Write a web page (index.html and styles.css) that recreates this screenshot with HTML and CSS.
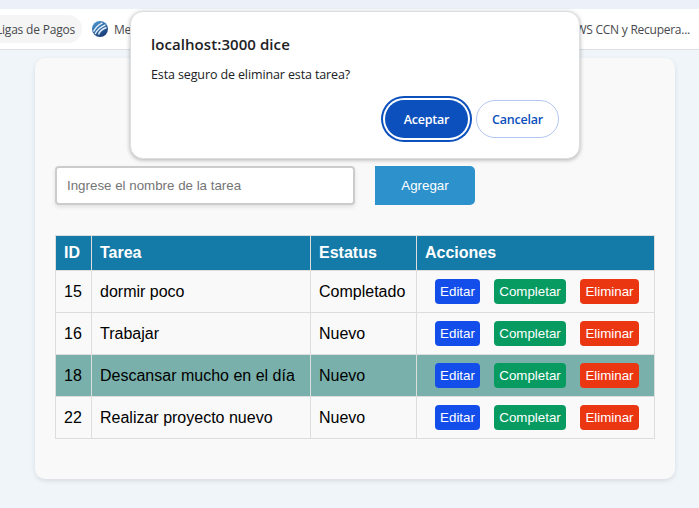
FILE: index.html
```html
<!DOCTYPE html>
<html lang="es">
<head>
<meta charset="utf-8">
<title>Tareas</title>
<link rel="stylesheet" href="styles.css">
</head>
<body>
<div class="tabstrip"></div>
<nav class="bookmarks">
  <div class="bookmark active"><span class="ligas">Ligas de Pagos</span></div>
  <div class="bookmark second">
    <svg width="16" height="16" viewBox="0 0 16 16">
      <defs><linearGradient id="g" x1="0" y1="0" x2="0.6" y2="1"><stop offset="0" stop-color="#5aa0cf"/><stop offset=".5" stop-color="#3270ad"/><stop offset="1" stop-color="#1b3c78"/></linearGradient></defs>
      <circle cx="8" cy="8" r="8" fill="url(#g)"/>
      <path d="M1.500 10.500C3.500 6.500 6 4 10.500 1.800M3.200 13C5 9 8 6 13.500 3.800M6.500 13.500C7.500 10.500 10 8 14.500 6.500" fill="none" stroke="#e6f1fa" stroke-width="1.400"/>
    </svg>
    <span>Me</span>
  </div>
  <div class="bookmark last">WS CCN y Recupera...</div>
</nav>
<main class="card">
  <form class="task-form">
    <input class="task-input" type="text" placeholder="Ingrese el nombre de la tarea">
    <button class="add" type="button">Agregar</button>
  </form>
  <table class="tasks">
    <colgroup><col class="c-id"><col class="c-task"><col class="c-status"><col class="c-actions"></colgroup>
    <thead><tr><th>ID</th><th>Tarea</th><th>Estatus</th><th>Acciones</th></tr></thead>
    <tbody>
      <tr><td>15</td><td>dormir poco</td><td>Completado</td><td><div class="actions"><button class="edit">Editar</button><button class="done">Completar</button><button class="del">Eliminar</button></div></td></tr>
      <tr><td>16</td><td>Trabajar</td><td>Nuevo</td><td><div class="actions"><button class="edit">Editar</button><button class="done">Completar</button><button class="del">Eliminar</button></div></td></tr>
      <tr class="hover"><td>18</td><td>Descansar mucho en el día</td><td>Nuevo</td><td><div class="actions"><button class="edit">Editar</button><button class="done">Completar</button><button class="del">Eliminar</button></div></td></tr>
      <tr><td>22</td><td>Realizar proyecto nuevo</td><td>Nuevo</td><td><div class="actions"><button class="edit">Editar</button><button class="done">Completar</button><button class="del">Eliminar</button></div></td></tr>
    </tbody>
  </table>
</main>
<div class="dialog" role="dialog">
  <h2><span>localhost:3000 dice</span></h2>
  <p><span>Esta seguro de eliminar esta tarea?</span></p>
  <div class="dialog-actions">
    <button class="accept">Aceptar</button>
    <button class="cancel">Cancelar</button>
  </div>
</div>
</body>
</html>
```
FILE: styles.css
```css
* { box-sizing: border-box; }
body {
  margin: 0;
  width: 699px;
  height: 508px;
  overflow: hidden;
  position: relative;
  background: #f0f5fa;
  font-family: "Liberation Sans", Arial, sans-serif;
  font-size: 16px;
  color: #000;
}
button { font-family: inherit; border: 0; margin: 0; padding: 0; white-space: nowrap; }
.tabstrip { height: 9px; background: #ebf0f9; }
.bookmarks {
  height: 41px;
  background: #fff;
  border-bottom: 1px solid #dcdfe3;
  display: flex;
  align-items: center;
  font-family: "Open Sans", "Noto Sans", sans-serif;
  font-size: 12px;
  letter-spacing: -0.2px;
  color: #47494d;
  white-space: nowrap;
}
.bookmark { display: flex; align-items: center; }
.active { width: 82px; height: 28px; border-radius: 0 14px 14px 0; background: #f5f5f5; justify-content: flex-end; padding-right: 7px; }
.second { margin-left: 10px; gap: 6px; }
.last { margin-left: auto; padding-right: 9px; letter-spacing: -0.25px; }
.card {
  width: 640px;
  height: 421px;
  margin: 8px 0 0 35px;
  padding: 108px 20px 20px;
  border-radius: 10px;
  background: #f9f9f9;
  box-shadow: 0 2px 5px rgba(0, 0, 0, 0.1);
}
.task-form { display: flex; gap: 20px; height: 39px; margin-bottom: 30px; }
.task-input {
  width: 300px;
  padding: 0 10px;
  border: 2px solid #ccc;
  border-radius: 4px;
  background: #fff;
  box-shadow: 0 2px 4px rgba(0, 0, 0, 0.1);
  font-family: inherit;
  font-size: 13.333px;
}
.task-input::placeholder { color: #757575; opacity: 1; }
.add { width: 100px; border-radius: 0 5px 5px 0; background: #2d91cb; color: #fff; font-size: 13.333px; }
.tasks { width: 600px; table-layout: fixed; border-collapse: collapse; }
.c-id { width: 36px; }
.c-task { width: 219px; }
.c-status { width: 106px; }
.c-actions { width: 238px; }
.tasks th, .tasks td { border: 1px solid #ddd; padding: 0 8px; text-align: left; white-space: nowrap; }
.tasks th { height: 35px; background: #147aa8; color: #fff; }
.tasks td { height: 42px; }
.hover { background: #79b0ac; }
.actions { display: flex; gap: 14px; padding-left: 10px; }
.actions button { height: 25px; border-radius: 4px; color: #fff; font-size: 13.333px; }
.edit { width: 45px; background: #134eeb; }
.done { width: 72px; background: #079b61; }
.del { width: 59px; background: #eb3612; }
.dialog {
  position: absolute;
  left: 130px;
  top: 11px;
  width: 450px;
  height: 148px;
  padding: 21px 21px 17px 20px;
  border: 1px solid #dcdfe1;
  border-radius: 13px;
  background: #fff;
  box-shadow: 0 1px 4px rgba(0, 0, 0, 0.3);
  display: flex;
  flex-direction: column;
  font-family: "Open Sans", "Noto Sans", sans-serif;
  color: #202124;
}
.dialog h2 { margin: 0; font-size: 15px; line-height: 22px; font-weight: 600; letter-spacing: 0.07px; }
.dialog p { margin: 11px 0 0; font-size: 12.5px; line-height: 18px; letter-spacing: -0.12px; }
.dialog-actions { display: flex; justify-content: flex-end; gap: 8px; margin-top: auto; margin-right: -1px; padding-bottom: 3px; }
.dialog-actions button { height: 38px; width: 83px; border-radius: 19px; font-size: 12.5px; font-weight: 600; letter-spacing: -0.2px; }
.accept { background: #0b50bd; color: #fff; box-shadow: 0 0 0 2px #fff, 0 0 0 4px #0b50bd; }
.dialog-actions .cancel { background: #fff; color: #0b50bd; border: 1px solid #b3c7f0; }
```
